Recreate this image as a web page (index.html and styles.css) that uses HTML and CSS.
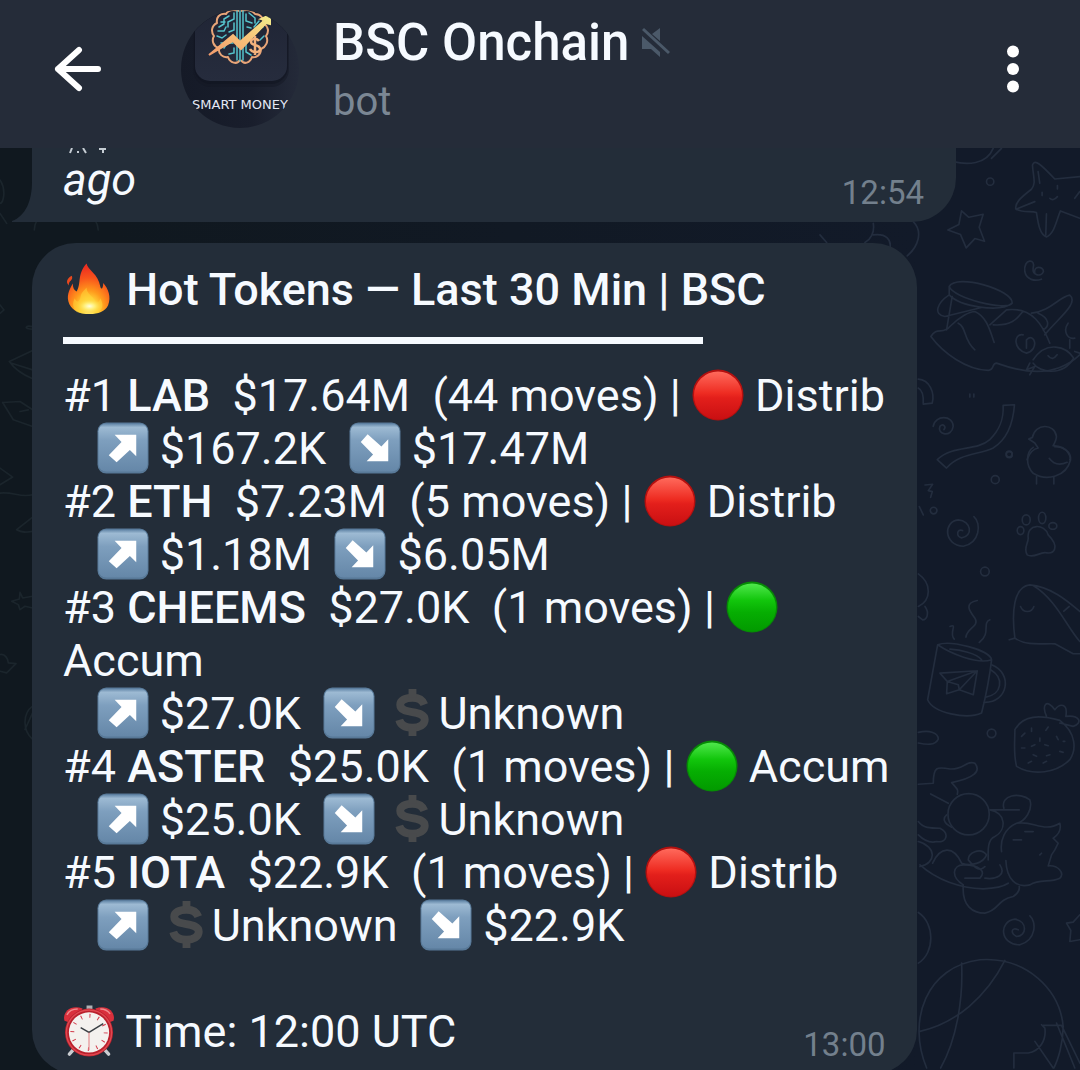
FILE: index.html
```html
<!DOCTYPE html>
<html lang="en">
<head>
    <meta charset="UTF-8">
    <meta name="viewport" content="width=device-width, initial-scale=1.0">
    <title>BSC Onchain</title>
    <link rel="stylesheet" href="styles.css">
</head>
<body>
    <!-- shared emoji -->
    <svg class="defs" aria-hidden="true">
        <defs>
            <linearGradient id="g-blue" x1="0" y1="0" x2="0" y2="1">
                <stop offset="0" stop-color="#5f83a5"/>
                <stop offset="0.08" stop-color="#9dbad3"/>
                <stop offset="0.35" stop-color="#7e9fbe"/>
                <stop offset="1" stop-color="#6587a8"/>
            </linearGradient>
            <linearGradient id="g-red" x1="0" y1="0" x2="0" y2="1">
                <stop offset="0" stop-color="#ff6a5c"/>
                <stop offset="0.45" stop-color="#ee2c22"/>
                <stop offset="0.55" stop-color="#e31f1b"/>
                <stop offset="1" stop-color="#c90f12"/>
            </linearGradient>
            <linearGradient id="g-green" x1="0" y1="0" x2="0" y2="1">
                <stop offset="0" stop-color="#4fe84c"/>
                <stop offset="0.35" stop-color="#12c60c"/>
                <stop offset="0.6" stop-color="#06ae02"/>
                <stop offset="1" stop-color="#029a00"/>
            </linearGradient>
            <radialGradient id="g-fire" cx="0.5" cy="0.92" r="0.85">
                <stop offset="0" stop-color="#fffbb0"/>
                <stop offset="0.22" stop-color="#ffdc3c"/>
                <stop offset="0.45" stop-color="#ff9a1c"/>
                <stop offset="0.75" stop-color="#f8541c"/>
                <stop offset="1" stop-color="#ee3020"/>
            </radialGradient>
            <radialGradient id="g-glow">
                <stop offset="0" stop-color="#fffde0"/>
                <stop offset="0.4" stop-color="#fff07a" stop-opacity="0.9"/>
                <stop offset="1" stop-color="#ffc52c" stop-opacity="0"/>
            </radialGradient>
            <linearGradient id="g-gold" x1="0" y1="1" x2="1" y2="0">
                <stop offset="0" stop-color="#f09a6c"/>
                <stop offset="0.5" stop-color="#f8c078"/>
                <stop offset="1" stop-color="#f2ee8c"/>
            </linearGradient>
        </defs>
        <symbol id="up" viewBox="0 0 53 53">
            <rect x="0.5" y="0.5" width="52" height="52" rx="9" fill="#587998"/>
            <rect x="1.5" y="1.5" width="50" height="49" rx="8" fill="url(#g-blue)"/>
            <path d="M18 13H40V35L33.500 28.500L20 41L12 34L25 20.500Z" fill="#fff"/>
        </symbol>
        <symbol id="down" viewBox="0 0 53 53">
            <rect x="0.5" y="0.5" width="52" height="52" rx="9" fill="#587998"/>
            <rect x="1.500" y="1.500" width="50" height="49" rx="8" fill="url(#g-blue)"/>
            <path d="M40 17.500V40H18L24.500 33L12 20.500L19 12.500L33 25Z" fill="#fff"/>
        </symbol>
        <symbol id="red" viewBox="0 0 53 53">
            <circle cx="26.500" cy="26.500" r="26" fill="#b3100f"/>
            <circle cx="26.500" cy="27" r="24.500" fill="url(#g-red)"/>
        </symbol>
        <symbol id="green" viewBox="0 0 53 53">
            <circle cx="26.500" cy="26.500" r="26" fill="#068a05"/>
            <circle cx="26.500" cy="27" r="24.500" fill="url(#g-green)"/>
        </symbol>
        <symbol id="dollar" viewBox="0 0 53 53">
            <path d="M39 18C37 12.500 33 11 27 11C19 11 14.500 14 14.500 18C14.500 29 39.500 22 39.500 33.500C39.500 38.500 34 41.500 27 41.500C19 41.500 15 39 13.500 33.500" fill="none" stroke="#484a4c" stroke-width="8"/>
            <path d="M23 2H31V11H23ZM23 41H31V50H23Z" fill="#484a4c"/>
        </symbol>
        <symbol id="fire" viewBox="0 0 53 53">
            <path d="M24 0.500C25 7 36 11 38 24C39 28 41 26 41 20.500C46 26 49.500 35 46 43C43 49.500 36 52 27 52C17 52 10 48.500 6.500 42C3 34 6 28 10 21C10 25 11 28 14 29C19 20 14 12 24 0.500Z" fill="url(#g-fire)"/>
            <path d="M9 13C11 18 5 18 6 23C2 19 5 15 9 13Z" fill="#e8481e"/>
            <path d="M14 50C9 45 10 40 12 36C14 41 17 40 18 34C19 29 22 28 24 25C24 32 31 34 33 39C35 41 37 40 38 36C42 43 40 47 36 50C30 52.500 20 52.500 14 50Z" fill="#ffd83c" opacity="0.500"/>
            <ellipse cx="27" cy="44" rx="14" ry="8" fill="url(#g-glow)"/>
        </symbol>
        <symbol id="clock" viewBox="0 0 53 53">
            <path d="M12 44L6.500 50M41 44L46.500 50" stroke="#c9ccd0" stroke-width="3.500" stroke-linecap="round"/>
            <path d="M24 0.500H30V6H24Z" fill="#aeb2b6"/>
            <path d="M1.500 16C-1 7 8 -1 20 3.500L17 9L7 18Z" fill="#d9303c"/>
            <path d="M51.500 16C54 7 45 -1 33 3.500L36 9L46 18Z" fill="#d9303c"/>
            <path d="M4 10C6 6 10 4 15 4M38 4C43 4 46 6 48 9" stroke="#f08a8c" stroke-width="1.500" fill="none"/>
            <circle cx="26.500" cy="28" r="24.500" fill="#b9202c"/>
            <circle cx="26.500" cy="28" r="23" fill="none" stroke="#e04850" stroke-width="1.500"/>
            <circle cx="26.500" cy="28" r="20.500" fill="#f4f1ee"/>
            <circle cx="26.500" cy="28" r="17" fill="none" stroke="#d2394a" stroke-width="4" stroke-dasharray="1 7.900"/>
            <path d="M18 23L26.500 28L41 19" fill="none" stroke="#3a3f44" stroke-width="1.500"/>
            <path d="M26.500 28V46" stroke="#e27a80" stroke-width="1"/>
        </symbol>
    </svg>

    <header class="topbar">
        <button class="icon-btn back" aria-label="Back">
            <svg width="48" height="48" viewBox="0 0 48 48" fill="none" stroke="#fff" stroke-width="6" stroke-linecap="round" stroke-linejoin="round">
                <path d="M44 24H4M25 5L4 24L25 43"/>
            </svg>
        </button>

        <svg class="avatar" viewBox="0 0 118 118" role="img" aria-label="Smart Money">
            <defs>
                <clipPath id="round"><circle cx="59" cy="59" r="59"/></clipPath>
                <linearGradient id="g-disc" x1="0" y1="0" x2="1" y2="0">
                    <stop offset="0" stop-color="#151a27"/>
                    <stop offset="0.6" stop-color="#191e2c"/>
                    <stop offset="1" stop-color="#242a39"/>
                </linearGradient>
                <linearGradient id="g-tile" x1="0" y1="0" x2="0" y2="1">
                    <stop offset="0" stop-color="#1e2333"/>
                    <stop offset="1" stop-color="#262c3d"/>
                </linearGradient>
            </defs>
            <g clip-path="url(#round)">
                <rect width="118" height="118" fill="url(#g-disc)"/>
                <rect x="12" y="-20" width="96" height="97" rx="18" fill="#131824" opacity="0.500"/>
                <rect x="13" y="-20" width="94" height="94" rx="17" fill="#10141f" opacity="0.500"/>
                <rect x="14" y="-20" width="92" height="91" rx="15" fill="url(#g-tile)"/>
                <g fill="none" stroke="#e8a578" stroke-width="2" stroke-linejoin="round">
                    <path d="M58 1C52 -1 47 0 45 4C38 3 35 8 36 13C30 16 30 22 33 26C30 31 33 37 38 38C37 44 42 48 47 47C49 53 56 55 59 50"/>
                    <path d="M60 1C66 -1 71 0 74 4C80 4 83 9 82 13C88 17 88 22 85 26C88 31 85 37 80 39C80 45 75 48 71 47C69 53 63 55 60 50"/>
                </g>
                <g fill="none" stroke="#55c3cc" stroke-width="1.500" stroke-linecap="round">
                    <path d="M56 1V50M59 1V51M62 1V50"/>
                    <path d="M53 3V9L47 12V17M48 6L43 9V14L38 17M53 13V20L48 22M37 21H43L45 17M36 26L41 28L45 25M52 33H46L43 38M53 38V43L48 44M40 33L46 33M65 4V11L71 13M68 3L74 8V13M78 11L73 17M82 17L76 21M65 33V42L70 45M68 30L72 27M83 26L79 30M40 12H44M66 17L70 18"/>
                </g>
                <path d="M28 45L52 25L59 32L84 10L80 9L89 5L89 14L85 13L60 39L52 31Z" fill="url(#g-gold)" stroke="url(#g-gold)" stroke-width="2"/>
                <path d="M78 31C76 28 70 28 70 32C70 36 79 34 79 39C79 43 71 43 69 39M74 26V45" fill="none" stroke="#f3b27c" stroke-width="2.500"/>
                <text class="avatar-text" x="59" y="99" text-anchor="middle">SMART MONEY</text>
            </g>
        </svg>

        <div class="info">
            <h1 class="title">BSC Onchain
                <svg class="muted" width="30" height="32" viewBox="0 0 30 32" fill="#4b5969" aria-label="Muted">
                    <path d="M19 1V14L11 7ZM1 9L19 25V30L10 22H1Z"/>
                    <path d="M2 2L28 26" stroke="#4b5969" stroke-width="3"/>
                </svg>
            </h1>
            <p class="status">bot</p>
        </div>

        <button class="icon-btn more" aria-label="More options">
            <svg width="14" height="48" viewBox="0 0 14 48" fill="#fff">
                <circle cx="7" cy="6.500" r="6"/>
                <circle cx="7" cy="24" r="6"/>
                <circle cx="7" cy="41.500" r="6"/>
            </svg>
        </button>
    </header>

    <main class="chat">
        <!-- wallpaper doodles -->
        <svg class="doodles" viewBox="0 148 1080 922" preserveAspectRatio="xMaxYMin slice" fill="none" stroke="#232d3e" stroke-width="5" stroke-linecap="round" stroke-linejoin="round" aria-hidden="true">
            <g transform="translate(820 140) scale(0.333)">
                <path d="M400 65C440 75 500 75 520 25M515 55L545 25"/>
                <circle cx="511" cy="125" r="11"/>
                <path d="M425 213L447 232L490 223L478 262L494 304L465 296L439 324L422 284L384 270L417 254Z"/>
                <path d="M638 75C645 55 665 75 705 117L780 110M765 175L780 155M638 75C640 110 650 130 635 148C600 175 585 190 588 207C610 220 635 212 650 218C655 250 660 285 680 291C705 280 710 240 722 213L780 235M590 207L645 185M678 285L680 222M655 95L660 130M690 175Q700 185 713 170M667 157V167M713 137V147"/>
                <path d="M160 250C165 280 150 300 135 308M160 285C200 280 215 300 210 325M280 245C310 275 295 320 262 348M0 285L20 308"/>
                <path d="M645 400C640 375 672 380 671 395C665 412 637 408 640 385C650 355 610 355 615 395C620 420 645 425 665 418"/>
                <path d="M388 440C410 400 580 450 577 490C560 515 400 475 388 440V465C420 500 540 520 577 490M388 465C350 490 340 525 375 530L485 503M397 470L380 570M333 590C350 560 370 585 390 560C420 530 450 515 465 515C500 530 510 570 523 608M415 550C440 560 430 600 465 630M333 590C370 640 440 690 505 692C525 690 515 670 530 670C600 695 700 720 780 645M520 555C590 560 600 520 610 515M510 555L560 510C640 500 670 560 690 610M635 520C690 515 720 470 750 466C780 490 710 540 675 585M655 520C690 535 690 560 670 570"/>
                <path d="M640 660C680 600 740 620 762 655C730 710 660 700 640 670M610 585C580 580 580 630 620 640C660 630 645 575 620 600V625M745 550C730 570 740 600 765 595M750 600V625M765 635L780 640M685 648Q698 665 712 645M630 670L620 690L645 680L630 705"/>
                <path d="M295 718C330 720 345 760 337 790L310 793C312 760 305 750 295 745M450 763V772M462 763V772"/>
                <path d="M340 860C345 825 400 825 400 860C395 895 350 885 360 860C370 850 380 860 372 870"/>
                <path d="M550 797L584 795C580 850 560 900 520 925C480 945 420 940 380 985L352 960C400 915 470 935 510 900C540 870 552 840 550 797Z"/>
                <path d="M627 898L638 893C645 850 705 850 710 890C710 900 705 910 700 918C750 920 755 960 750 960M627 898L645 910L655 925C630 930 625 955 622 960"/>
                <circle cx="568" cy="943" r="9"/>
            </g>
            <g transform="translate(900 440) scale(0.333)">
                <path d="M400 22C380 35 375 75 400 100C440 125 500 110 512 60C515 35 490 20 465 20M448 55C465 78 485 75 502 67M410 110V132M462 110V132"/>
                <circle cx="328" cy="44" r="9"/>
                <circle cx="286" cy="119" r="12"/>
                <circle cx="101" cy="212" r="10"/>
                <circle cx="255" cy="395" r="13"/>
                <circle cx="275" cy="881" r="13"/>
                <path d="M75 135L98 133L85 152L97 155L92 172M58 200L70 225"/>
                <path d="M222 230C245 250 240 310 190 319C130 315 130 245 175 240C215 242 220 290 185 294C168 290 170 265 188 272"/>
                <path d="M385 295C380 250 435 250 445 285C480 320 465 345 435 338C415 340 400 355 382 345C370 325 385 310 385 295Z"/>
                <ellipse cx="379" cy="240" rx="12" ry="15"/>
                <ellipse cx="427" cy="234" rx="11" ry="17"/>
                <ellipse cx="362" cy="272" rx="10" ry="12"/>
                <ellipse cx="459" cy="258" rx="12" ry="10"/>
                <path d="M55 402C95 430 95 480 55 500M75 500C90 520 80 540 68 540L55 530"/>
                <path d="M328 600L345 595C335 520 340 440 390 435C450 440 500 480 540 515M345 595C380 620 430 610 465 612L520 642H540M400 437C470 480 500 560 540 605M362 500C370 520 395 520 402 500M492 514L508 500"/>
                <path d="M150 560C175 550 145 580 163 598M232 482C190 490 210 515 225 535C240 560 200 565 198 592M270 540C245 550 275 580 238 608"/>
                <path d="M113 615C150 600 270 630 275 660C230 675 150 640 113 615L83 780C100 820 200 840 245 820C260 760 268 720 275 660M150 628C180 630 230 640 245 660"/>
                <path d="M275 675C340 700 325 790 253 788M272 690C315 715 305 765 258 772"/>
                <path d="M120 700L232 693L220 765L178 750L140 762L142 725L120 700M142 725L232 693L178 750L175 735Z"/>
                <path d="M55 878C90 870 115 880 115 898C105 918 80 915 55 910"/>
                <path d="M345 870C370 825 420 825 480 842C530 880 530 930 510 960C470 1000 400 1010 350 980C340 940 345 910 345 870M440 830C425 795 440 775 465 810C480 790 505 790 498 830C540 825 550 850 520 860L480 850"/>
                <path d="M375 880L365 890M395 865V875M445 862L438 872M420 895V905M375 925H365M405 915L395 920M445 918L435 915M470 890L475 900M495 905H490M400 945L410 950M450 945L440 948M480 935L490 938M385 970L395 965M430 970L440 965"/>
            </g>
            <g transform="translate(900 740) scale(0.333)">
                <path d="M55 133L100 130C100 80 110 80 150 87C190 90 200 60 225 70C245 95 220 115 155 128C175 150 175 150 172 163M92 162L145 190M55 245C70 265 90 265 120 265C150 280 140 310 110 305C90 310 70 300 55 285M55 305C110 320 110 370 60 380"/>
                <circle cx="206" cy="223" r="62"/>
                <path d="M140 225C128 235 130 250 155 262M270 210C320 220 320 270 285 290C260 300 265 340 265 360M270 210H358M312 205C300 165 360 155 390 180C400 210 375 245 350 250C315 265 300 300 305 335M350 250C400 240 430 280 480 250C485 270 475 285 460 295L475 310L465 330L455 345L445 378C475 375 495 400 480 415C450 430 420 415 390 435C350 445 320 420 318 362M375 275H400M340 300H365M420 345L425 340"/>
                <path d="M98 370C120 320 160 315 185 370C215 380 250 370 260 345C240 320 205 340 205 360C230 390 240 395 255 380M60 375C110 420 180 445 250 447C290 445 310 440 325 430M190 435C150 410 160 375 190 375C240 375 260 395 240 415H195M255 415C290 420 320 405 300 375M190 435C185 500 220 520 255 520C300 510 290 480 340 470C355 460 360 450 358 440"/>
                <path d="M390 528C410 545 410 600 360 615C300 615 295 545 345 538C385 545 380 590 350 590C330 580 335 560 355 570M540 525L520 547L500 550L513 572L510 605L540 600"/>
                <path d="M55 518C105 550 105 640 55 670M80 985C20 840 80 680 240 660C380 650 480 750 490 860C490 910 475 960 462 985M185 670C190 780 170 900 122 985M315 662C260 770 170 850 60 875M425 855L435 865C440 900 420 935 385 940H342V985M405 905L460 985M430 857H485L540 970M470 850L525 985"/>
            </g>
            <g transform="translate(0 230) scale(0.333)" stroke="#1b252c">
                <path d="M0 225L12 240L0 250M98 362L28 395C45 420 70 435 98 447M35 400L98 420M98 290C75 285 70 298 98 298M8 518L60 515L98 540M8 518L40 570L98 590M60 545L85 540M0 715L38 742L0 765M0 790C40 785 60 805 98 795M98 862L50 900C65 910 80 908 98 905M60 1088L68 1105L98 1100M60 1088L58 1108L35 1115L55 1125L60 1140L75 1130L98 1135M0 1275C15 1270 25 1290 25 1300L48 1302L20 1330L0 1325M98 1430C70 1450 65 1500 98 1530M98 1450L75 1500"/>
                <path d="M103 0C105 -90 290 -90 295 0M190 -60L225 -45M0 -150C20 -120 10 -80 0 -80M0 -50L20 -20"/>
            </g>
        </svg>

        <article class="bubble previous">
            <svg class="tail" width="24" height="40" viewBox="0 0 24 40" aria-hidden="true"><path d="M20 0C20 18 14 34 0 39V40H24V0Z"/></svg>
            <svg class="cut" width="60" height="6" viewBox="0 0 60 6" fill="none" stroke="#c5ccd3" stroke-width="2" aria-hidden="true"><path d="M8 0L6 5M14 3V5M19 0L22 5M35 1H42M39 1V5"/></svg>
            <div class="line"><em>ago</em></div>
            <time class="time">12:54</time>
        </article>

        <article class="bubble">
            <h2 class="line"><svg class="emoji"><use href="#fire"/></svg> Hot Tokens — Last 30 Min | BSC</h2>
            <hr class="rule">
            <div class="line">#1 <b>LAB</b>  $17.64M  (44 moves) | <svg class="emoji"><use href="#red"/></svg> Distrib</div>
            <div class="line">   <svg class="emoji"><use href="#up"/></svg> $167.2K  <svg class="emoji"><use href="#down"/></svg> $17.47M</div>
            <div class="line">#2 <b>ETH</b>  $7.23M  (5 moves) | <svg class="emoji"><use href="#red"/></svg> Distrib</div>
            <div class="line">   <svg class="emoji"><use href="#up"/></svg> $1.18M  <svg class="emoji"><use href="#down"/></svg> $6.05M</div>
            <div class="line">#3 <b>CHEEMS</b>  $27.0K  (1 moves) | <svg class="emoji"><use href="#green"/></svg><br>Accum</div>
            <div class="line">   <svg class="emoji"><use href="#up"/></svg> $27.0K  <svg class="emoji"><use href="#down"/></svg> <svg class="emoji"><use href="#dollar"/></svg>Unknown</div>
            <div class="line">#4 <b>ASTER</b>  $25.0K  (1 moves) | <svg class="emoji"><use href="#green"/></svg> Accum</div>
            <div class="line">   <svg class="emoji"><use href="#up"/></svg> $25.0K  <svg class="emoji"><use href="#down"/></svg> <svg class="emoji"><use href="#dollar"/></svg>Unknown</div>
            <div class="line">#5 <b>IOTA</b>  $22.9K  (1 moves) | <svg class="emoji"><use href="#red"/></svg> Distrib</div>
            <div class="line">   <svg class="emoji"><use href="#up"/></svg> <svg class="emoji"><use href="#dollar"/></svg>Unknown  <svg class="emoji"><use href="#down"/></svg> $22.9K</div>
            <div class="line footer"><svg class="emoji"><use href="#clock"/></svg> Time: 12:00 UTC</div>
            <time class="time">13:00</time>
        </article>
    </main>
</body>
</html>
```

FILE: styles.css
```css
* {
    box-sizing: border-box;
}
body {
    margin: 0;
    height: 100vh;
    display: flex;
    flex-direction: column;
    overflow: hidden;
    background: #121a29;
    color: #f6faff;
    font-family: Roboto, "Liberation Sans", sans-serif;
}
h1, h2, p {
    margin: 0;
}
.defs {
    position: absolute;
    width: 0;
    height: 0;
}

/* header */
.topbar {
    display: flex;
    align-items: center;
    flex: none;
    height: 148px;
    padding: 0 60px 10px 54px;
    background: #252c39;
}
.icon-btn {
    display: flex;
    padding: 0;
    border: 0;
    background: none;
    cursor: pointer;
}
.avatar {
    width: 118px;
    height: 118px;
    margin-left: 79px;
}
.avatar-text {
    font: 13px "DejaVu Sans", sans-serif;
    fill: #e4e8f4;
}
.info {
    flex: 1;
    margin-left: 34px;
}
.title {
    display: flex;
    align-items: center;
    gap: 12px;
    font-size: 51px;
    font-weight: 500;
    line-height: 66px;
}
.status {
    font-size: 40px;
    line-height: 52px;
    color: #7b8794;
}

/* messages */
.chat {
    position: relative;
    flex: 1;
    overflow: hidden;
    padding-left: 32px;
    background: linear-gradient(90deg, #10181f, #10181f 10%, #121a29 85%);
}
.doodles {
    position: absolute;
    top: 0;
    left: 0;
    width: 100%;
    height: 100%;
}
.bubble {
    position: relative;
    width: fit-content;
    padding: 20px 28px 16px 31px;
    border-radius: 44px;
    background: #232d39;
}
.previous {
    width: 924px;
    max-width: 100%;
    margin-bottom: 21px;
    padding-top: 5px;
    border-radius: 0 0 44px 0;
}
.tail {
    position: absolute;
    left: -20px;
    bottom: 0;
    fill: #232d39;
}
.cut {
    position: absolute;
    top: 0;
    left: 32px;
}
.line {
    min-height: 53px;
    font-size: 45px;
    font-weight: 400;
    line-height: 53px;
    white-space: pre;
}
h2.line {
    font-weight: 500;
}
.line b {
    font-weight: 500;
}
.emoji {
    width: 52px;
    height: 52px;
    vertical-align: top;
}
.rule {
    width: 640px;
    max-width: 100%;
    height: 7px;
    margin: 21px 0 25px;
    border: 0;
    background: #f6faff;
}
.footer {
    margin-top: 53px;
}
.time {
    position: absolute;
    right: 32px;
    bottom: 9px;
    font-size: 33px;
    line-height: 40px;
    color: #73808d;
}
```
